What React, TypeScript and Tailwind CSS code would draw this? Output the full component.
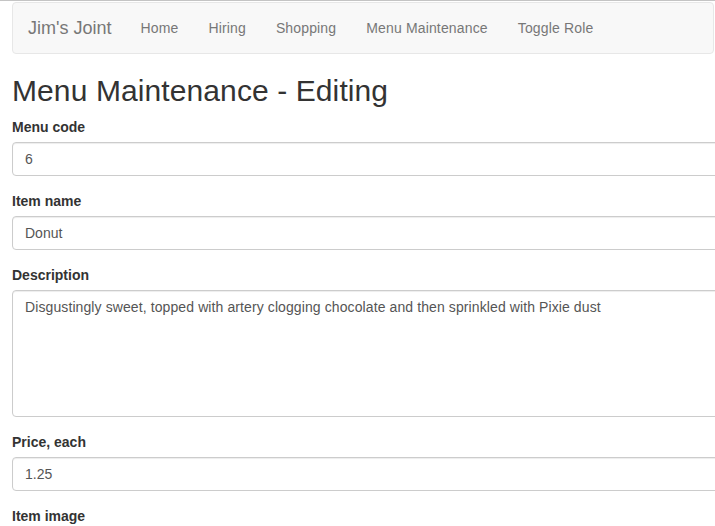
const links = ['Home', 'Hiring', 'Shopping', 'Menu Maintenance', 'Toggle Role'];

const inputCls =
  'block w-full h-[34px] px-3 py-1.5 text-sm text-[#555] bg-white border border-[#ccc] rounded shadow-[inset_0_1px_1px_rgba(0,0,0,0.075)] outline-none';

function Field({ label, children }: { label: string; children: React.ReactNode }) {
  return (
    <div className="mb-[15px]">
      <label className="block mb-[5px] text-sm font-bold leading-5 text-[#333]">{label}</label>
      {children}
    </div>
  );
}

export default function App() {
  return (
    <div className="min-h-screen bg-white overflow-hidden text-[#333] font-['Liberation_Sans',Arial,sans-serif]">
      <div className="h-px bg-[#c4c4c4]" />
      <div className="pl-3">
        {/* Navbar */}
        <nav className="mt-px mr-px h-[50px] flex items-center bg-[#f8f8f8] border border-[#e7e7e7] rounded mb-5 box-content">
          <span className="pl-[15px] pr-[14px] text-lg leading-5 text-[#777]">Jim's Joint</span>
          {links.map((l) => (
            <span key={l} className="px-[15px] text-sm leading-5 text-[#777] tracking-[0.15px]">
              {l}
            </span>
          ))}
        </nav>

        <div className="w-[900px]">
          <h2 className="mt-5 mb-2.5 text-[30px] leading-[1.1] font-normal tracking-[0.1px]">Menu Maintenance - Editing</h2>

          <form>
            <Field label="Menu code">
              <input className={inputCls} defaultValue="6" />
            </Field>
            <Field label="Item name">
              <input className={inputCls} defaultValue="Donut" />
            </Field>
            <Field label="Description">
              <textarea
                className="block w-full mt-px h-[127px] px-3 py-1.5 text-sm leading-5 text-[#555] tracking-[0.1px] bg-white border border-[#ccc] rounded shadow-[inset_0_1px_1px_rgba(0,0,0,0.075)] outline-none resize-none"
                defaultValue="Disgustingly sweet, topped with artery clogging chocolate and then sprinkled with Pixie dust"
              />
            </Field>
            <Field label="Price, each">
              <input className={inputCls} defaultValue="1.25" />
            </Field>
            <Field label="Item image">
              <input className={inputCls} defaultValue="" />
            </Field>
          </form>
        </div>
      </div>
    </div>
  );
}
